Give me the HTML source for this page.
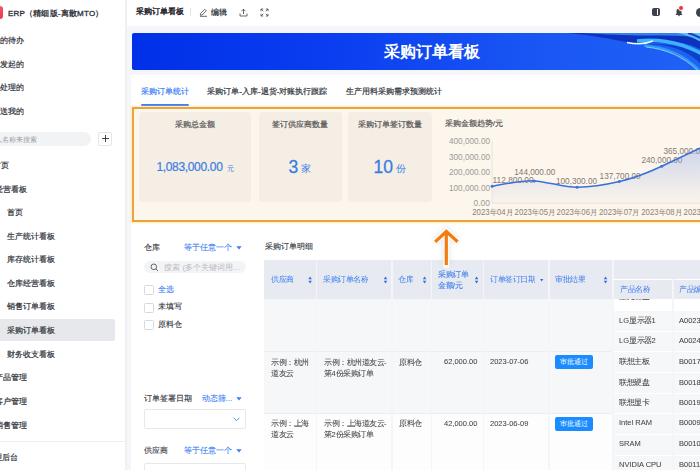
<!DOCTYPE html>
<html><head><meta charset="utf-8">
<style>
*{box-sizing:border-box;margin:0;padding:0}
html,body{width:700px;height:470px;overflow:hidden;background:#f4f6f9;font-family:"Liberation Sans",sans-serif;color:#333;font-size:8px}
.a{position:absolute;white-space:nowrap}
.t{position:absolute;white-space:nowrap;height:10px;line-height:10px}
#side{position:absolute;left:0;top:0;width:125px;height:470px;background:#fff;overflow:hidden}
.mi{position:absolute;white-space:nowrap;height:12px;line-height:12px;font-size:8px;color:#2f343b;-webkit-text-stroke:0.2px}
#top{position:absolute;left:125px;top:0;width:575px;height:26px;background:#fff}
#banner{position:absolute;left:132px;top:33px;width:580px;height:37px;border-radius:2px;background:linear-gradient(90deg,#0030e8 0%,#0a3ef0 35%,#1a56f4 70%,#2062f5 100%);overflow:hidden}
#panel{position:absolute;left:131px;top:75px;width:580px;height:400px;background:#fff}
.blue{color:#3b7ef5}
#obox{position:absolute;left:132px;top:106.8px;width:580px;height:115px;border:2.2px solid #eaa43e;background:#fdf6ec;box-shadow:0 0 1.5px 0.8px rgba(255,225,140,.7)}
.card{position:absolute;top:112px;height:90px;background:#f5eee5;border-radius:4px}
.hd{position:absolute;top:260px;height:39px;background:#e7eaf0}
.sep{position:absolute;width:1.5px;background:#f3f5f8}
.cell{position:absolute;font-size:8px;color:#444;line-height:12.27px;white-space:nowrap;-webkit-text-stroke:0.05px;transform:scale(.9375);transform-origin:0 0}
.sc{transform:scale(.9375);transform-origin:0 50%}
</style></head><body>

<div id="side">
  <div class="a" style="left:-10px;top:6px;width:13px;height:13px;border-radius:3px;background:linear-gradient(135deg,#ff6a6a,#e8384f)"></div>
  <div class="mi" style="left:8px;top:8px;color:#2b2f36;-webkit-text-stroke:0.3px;letter-spacing:0.2px">ERP（精细版-离散MTO）</div>
  <div class="mi" style="left:-8px;top:35px">我的待办</div>
  <div class="mi" style="left:-8px;top:59px">我发起的</div>
  <div class="mi" style="left:-8px;top:82px">我处理的</div>
  <div class="mi" style="left:-8px;top:106px">抄送我的</div>
  <div class="a" style="left:-10px;top:131.5px;width:101px;height:14px;border-radius:7px;background:#f2f3f5"></div>
  <div class="mi" style="left:-12px;top:134px;font-size:7px;color:#9a9ea6;-webkit-text-stroke:0">输入名称来搜索</div>
  <div class="a" style="left:98px;top:132px;width:14px;height:13.5px;border:1px solid #e3e5ea;border-radius:2px;background:#fff"></div>
  <div class="a" style="left:101.5px;top:138.3px;width:7px;height:0.9px;background:#444"></div>
  <div class="a" style="left:104.55px;top:135.2px;width:0.9px;height:7px;background:#444"></div>
  <div class="mi" style="left:-7px;top:160px">首页</div>
  <div class="mi" style="left:-5px;top:184px">经营看板</div>
  <div class="mi" style="left:7px;top:207px">首页</div>
  <div class="mi" style="left:7px;top:230.5px">生产统计看板</div>
  <div class="mi" style="left:7px;top:254px">库存统计看板</div>
  <div class="mi" style="left:7px;top:277.5px">仓库经营看板</div>
  <div class="mi" style="left:7px;top:301px">销售订单看板</div>
  <div class="a" style="left:0;top:319px;width:115px;height:22px;background:#e6e8ec;border-radius:0 2px 2px 0"></div>
  <div class="mi" style="left:7px;top:325px">采购订单看板</div>
  <div class="mi" style="left:7px;top:348.5px">财务收支看板</div>
  <div class="mi" style="left:-5px;top:372px">产品管理</div>
  <div class="mi" style="left:-5px;top:395.5px">客户管理</div>
  <div class="mi" style="left:-5px;top:419.5px">销售管理</div>
  <div class="a" style="left:0;top:440.5px;width:125px;height:1px;background:#eceef1"></div>
  <div class="mi" style="left:-14.5px;top:451.5px">管理后台</div>
</div>

<div id="top">
  <div class="mi" style="left:11px;top:6.3px;color:#1f2329;-webkit-text-stroke:0.4px">采购订单看板</div>
  <div class="a" style="left:64.5px;top:8px;width:1px;height:8px;background:#dfe1e6"></div>
  <svg class="a" style="left:74px;top:7.5px" width="9" height="9" viewBox="0 0 9 9"><path d="M1 8.3H8M1.3 7.2L1.6 5.5 5.8 1.3 7.3 2.8 3.1 7 1.3 7.2Z" fill="none" stroke="#444" stroke-width="0.8"/></svg>
  <div class="mi" style="left:86.4px;top:6.8px;font-size:7.6px;color:#2a2e35">编辑</div>
  <svg class="a" style="left:114px;top:7.5px" width="9" height="9" viewBox="0 0 9 9"><path d="M1 5.5V8H8V5.5M4.5 6V1.2M2.5 3.2L4.5 1.2 6.5 3.2" fill="none" stroke="#444" stroke-width="0.8"/></svg>
  <svg class="a" style="left:134.5px;top:7.5px" width="9" height="9" viewBox="0 0 9 9"><path d="M1 3.2V1H3.2M5.8 1H8V3.2M8 5.8V8H5.8M3.2 8H1V5.8M1.2 1.2L3.3 3.3M7.8 1.2L5.7 3.3M7.8 7.8L5.7 5.7M1.2 7.8L3.3 5.7" fill="none" stroke="#444" stroke-width="0.8"/></svg>
  <div class="a" style="left:526.5px;top:7.7px;width:8.5px;height:8.5px;border-radius:2px;background:#3d434d"></div>
  <div class="a" style="left:531.5px;top:9.3px;width:1.3px;height:5.3px;background:#fff"></div>
  <svg class="a" style="left:549px;top:6px" width="10" height="11" viewBox="0 0 10 11"><path d="M1.5 9H8.5L7.5 7.5V5A2.5 2.5 0 0 0 2.5 5V7.5Z M4 9.3A1 1 0 0 0 6 9.3" fill="#3d434d"/></svg>
  <div class="a" style="left:553px;top:4.5px;width:6px;height:6px;border-radius:3px;background:#f0303f;border:0.8px solid #fff"></div>
  <div class="a" style="left:570.5px;top:7.5px;width:9px;height:9px;border-radius:5px;background:#3d434d"></div>
</div>

<div id="banner">
  <svg class="a" style="left:0;top:0" width="580" height="37" viewBox="0 0 580 37">
    <defs>
      <linearGradient id="w1" x1="0" y1="0" x2="0" y2="1"><stop offset="0" stop-color="#3a8cf5"/><stop offset="0.35" stop-color="#1450d8"/><stop offset="1" stop-color="#082db0"/></linearGradient>
      <filter id="bl"><feGaussianBlur stdDeviation="0.5"/></filter>
    </defs>
    <g filter="url(#bl)">
    <path d="M436 0C468 3 486 8 500 9.8C515 10.5 530 8.5 545 9C565 12 575 20 580 25V0Z" fill="#0a33bd"/>
    <path d="M450 0C480 1.5 500 3 520 2.5C540 2 560 3 580 6V0Z" fill="#3d8ef5" opacity="0.85"/>
    <path d="M512 12C532 10 552 16 566 28L573 37H580V28C565 18 540 8 512 12Z" fill="#0b40c8"/>
    <path d="M505 8C530 5 556 11 580 27" fill="none" stroke="#3db2ff" stroke-width="3.5"/>
    <path d="M512 12.5C532 14 552 22 567 37" fill="none" stroke="#2a9af5" stroke-width="2.6"/>
    <path d="M514 14C534 16 552 24 565 37" fill="none" stroke="#b8e4ff" stroke-width="0.7"/>
    <path d="M545 0C560 3 572 10 580 16V0Z" fill="#62ccff" opacity="0.85"/>
    <path d="M556 0C566 3 575 8 580 12" fill="none" stroke="#1c40c0" stroke-width="2"/>
    <path d="M495 9.5C505 11.5 514 11 521 8" fill="none" stroke="#f0f9ff" stroke-width="1.7"/>
    <path d="M540 20C545 22 548 25 550 27" fill="none" stroke="#9a70e0" stroke-width="0.8" opacity="0.6"/>
    </g>
  </svg>
  <div class="a" style="left:252px;top:9px;height:20px;line-height:20px;font-size:16px;font-weight:bold;color:#fff">采购订单看板</div>
</div>

<div id="panel"></div>
<div class="mi blue" style="left:141px;top:85.7px">采购订单统计</div>
<div class="a" style="left:141px;top:104px;width:48px;height:2px;background:#3b7ef5;border-radius:1px"></div>
<div class="mi" style="left:207.3px;top:85.7px">采购订单-入库-退货-对账执行跟踪</div>
<div class="mi" style="left:345.8px;top:85.7px">生产用料采购需求预测统计</div>

<div id="obox"></div>
<div class="card" style="left:138.5px;width:112.5px"></div>
<div class="card" style="left:258.7px;width:83px"></div>
<div class="card" style="left:348.4px;width:83.5px"></div>
<div class="mi" style="left:175px;top:119.2px;color:#555">采购总金额</div>
<div class="mi" style="left:272px;top:119.2px;color:#555">签订供应商数量</div>
<div class="mi" style="left:358px;top:119.2px;color:#555">采购订单签订数量</div>
<div class="a blue" style="left:156.4px;top:159px;height:16px;line-height:16px;font-size:12px;letter-spacing:-0.33px;color:#3a7de2;-webkit-text-stroke:0.2px">1,083,000.00</div>
<div class="a blue" style="left:227.4px;top:164px;color:#3a7de2;height:10px;line-height:10px;font-size:6.5px">元</div>
<div class="a blue" style="left:288.5px;top:156px;color:#3a7de2;height:22px;line-height:22px;font-size:17.5px;-webkit-text-stroke:0.3px">3</div>
<div class="a blue" style="left:300.5px;top:163px;color:#3a7de2;height:12px;line-height:12px;font-size:10px">家</div>
<div class="a blue" style="left:373.5px;top:156px;color:#3a7de2;height:22px;line-height:22px;font-size:17.5px;-webkit-text-stroke:0.3px">10</div>
<div class="a blue" style="left:395.8px;top:163px;color:#3a7de2;height:12px;line-height:12px;font-size:10px">份</div>

<div class="mi" style="left:444.7px;top:118px;color:#555">采购金额趋势/元</div>
<div class="a" style="left:133px;top:109px;width:567px;height:112px;overflow:hidden">
<svg class="a" style="left:-133px;top:-109px" width="700" height="470" viewBox="0 0 700 470">
  <defs>
    <linearGradient id="ar" x1="0" y1="146" x2="0" y2="203" gradientUnits="userSpaceOnUse"><stop offset="0" stop-color="#7a9de6" stop-opacity="0.38"/><stop offset="0.6" stop-color="#8aa6e6" stop-opacity="0.18"/><stop offset="1" stop-color="#9ab0e6" stop-opacity="0.03"/></linearGradient>
  </defs>
  <g font-family="Liberation Sans" font-size="8.8" fill="#9a9a9a" text-anchor="end">
    <text x="490" y="144.3" textLength="41.0" lengthAdjust="spacingAndGlyphs">400,000.00</text>
    <text x="490" y="159.7" textLength="41.0" lengthAdjust="spacingAndGlyphs">300,000.00</text>
    <text x="490" y="175.1" textLength="41.0" lengthAdjust="spacingAndGlyphs">200,000.00</text>
    <text x="490" y="190.5" textLength="41.0" lengthAdjust="spacingAndGlyphs">100,000.00</text>
    <text x="490" y="205.9" textLength="16.4" lengthAdjust="spacingAndGlyphs">0.00</text>
  </g>
  <line x1="492.1" y1="141" x2="492.1" y2="203" stroke="#e6e1da" stroke-width="0.8"/>
  <line x1="492.1" y1="203.2" x2="700" y2="203.2" stroke="#e2ddd6" stroke-width="0.8"/>
  <g font-family="Liberation Sans" font-size="8.8" fill="#847b74">
    <text x="492.6" y="182.5" textLength="41.0" lengthAdjust="spacingAndGlyphs">112,800.00</text>
    <text x="514.3" y="174.9" textLength="41.0" lengthAdjust="spacingAndGlyphs">144,000.00</text>
    <text x="556" y="183.8" textLength="41.0" lengthAdjust="spacingAndGlyphs">100,300.00</text>
    <text x="599.6" y="178.7" textLength="41.0" lengthAdjust="spacingAndGlyphs">137,700.00</text>
    <text x="641.4" y="162.9" textLength="41.0" lengthAdjust="spacingAndGlyphs">240,000.00</text>
    <text x="663.5" y="153.9" textLength="41.0" lengthAdjust="spacingAndGlyphs">365,000.00</text>
  </g>
  <path d="M492.1 186.2 C499.1 185.3 520.2 180.2 534.2 180.9 C548.2 181.6 562.9 187.2 577.1 187.3 C591.3 187.4 604.5 185.1 619.3 181.6 C634.1 178.1 647.4 173.1 661.7 166.3 C676 159.5 696.2 150 703.1 146.7 L703.1 203 L492.1 203Z" fill="url(#ar)"/>
  <path d="M492.1 186.2 C499.1 185.3 520.2 180.2 534.2 180.9 C548.2 181.6 562.9 187.2 577.1 187.3 C591.3 187.4 604.5 185.1 619.3 181.6 C634.1 178.1 647.4 173.1 661.7 166.3 C676 159.5 696.2 150 703.1 146.7" fill="none" stroke="#3a70d8" stroke-width="1.5"/>
  <g fill="#3a72dc">
    <circle cx="492.1" cy="186.2" r="1.5"/><circle cx="534.2" cy="180.9" r="1.5"/><circle cx="577.1" cy="187.3" r="1.5"/><circle cx="619.3" cy="181.6" r="1.5"/><circle cx="661.7" cy="166.3" r="1.5"/>
  </g>
  <g font-family="Liberation Sans" font-size="8.4" fill="#8a8078" text-anchor="middle">
    <text x="492.7" y="215.1" textLength="40.8" lengthAdjust="spacingAndGlyphs">2023年04月</text>
    <text x="535" y="215.1" textLength="40.8" lengthAdjust="spacingAndGlyphs">2023年05月</text>
    <text x="577" y="215.1" textLength="40.8" lengthAdjust="spacingAndGlyphs">2023年06月</text>
    <text x="619.4" y="215.1" textLength="40.8" lengthAdjust="spacingAndGlyphs">2023年07月</text>
    <text x="661.7" y="215.1" textLength="40.8" lengthAdjust="spacingAndGlyphs">2023年08月</text>
    <text x="704" y="215.1" textLength="40.8" lengthAdjust="spacingAndGlyphs">2023年09月</text>
  </g>
</svg>
</div>

<!-- filter -->
<div class="mi" style="left:144.2px;top:242px;-webkit-text-stroke:0.1px">仓库</div>
<div class="mi blue" style="left:183.8px;top:242px;-webkit-text-stroke:0.1px">等于任意一个</div>
<svg class="a" style="left:235.5px;top:246px" width="6" height="4"><path d="M0.3 0.3H5.7L3 3.5Z" fill="#3b7ef5"/></svg>
<div class="a" style="left:144.2px;top:260.6px;width:102px;height:12.2px;border-radius:6.1px;background:#f3f4f6"></div>
<svg class="a" style="left:150px;top:262.5px" width="9" height="9" viewBox="0 0 9 9"><circle cx="3.8" cy="3.8" r="2.8" fill="none" stroke="#555" stroke-width="0.9"/><path d="M5.9 5.9L8 8" stroke="#555" stroke-width="0.9"/></svg>
<div class="mi" style="left:164.4px;top:261.8px;font-size:8px;color:#b9bcc2;-webkit-text-stroke:0">搜索 (多个关键词用...</div>
<div class="a" style="left:143.5px;top:285px;width:10px;height:10px;border:1px solid #d6d9de;border-radius:1.5px;background:#fff"></div>
<div class="mi blue" style="left:157.7px;top:283.6px;-webkit-text-stroke:0.1px">全选</div>
<div class="a" style="left:143.5px;top:302.5px;width:10px;height:10px;border:1px solid #d6d9de;border-radius:1.5px;background:#fff"></div>
<div class="mi" style="left:157.7px;top:301.3px;-webkit-text-stroke:0.1px">未填写</div>
<div class="a" style="left:143.5px;top:320px;width:10px;height:10px;border:1px solid #d6d9de;border-radius:1.5px;background:#fff"></div>
<div class="mi" style="left:157.7px;top:318.6px;-webkit-text-stroke:0.1px">原料仓</div>

<div class="mi" style="left:144.1px;top:393px;-webkit-text-stroke:0.1px">订单签署日期</div>
<div class="mi blue" style="left:201.6px;top:393px;-webkit-text-stroke:0.1px">动态筛...</div>
<svg class="a" style="left:235.5px;top:397px" width="6" height="4"><path d="M0.3 0.3H5.7L3 3.5Z" fill="#3b7ef5"/></svg>
<div class="a" style="left:143.7px;top:409.4px;width:102.6px;height:19.2px;border:1px solid #e6e8ec;border-radius:2px;background:#fff"></div>
<svg class="a" style="left:233px;top:417px" width="7" height="5"><path d="M0.6 0.8L3.5 3.7 6.4 0.8" fill="none" stroke="#4a7fd8" stroke-width="0.9"/></svg>
<div class="mi" style="left:144px;top:445px;-webkit-text-stroke:0.1px">供应商</div>
<div class="mi blue" style="left:183.5px;top:445px;-webkit-text-stroke:0.1px">等于任意一个</div>
<svg class="a" style="left:235.5px;top:449px" width="6" height="4"><path d="M0.3 0.3H5.7L3 3.5Z" fill="#3b7ef5"/></svg>
<div class="a" style="left:143.7px;top:462.6px;width:102.6px;height:19.2px;border:1px solid #e6e8ec;border-radius:2px;background:#fff"></div>

<!-- table -->
<div class="mi" style="left:264.5px;top:241px;-webkit-text-stroke:0.1px">采购订单明细</div>
<div class="a" style="left:264.4px;top:260px;width:440px;height:39px;background:#e7eaf0"></div>
<div class="a" style="left:264.4px;top:299px;width:440px;height:52px;background:#f6f7f9"></div>
<div class="a" style="left:264.4px;top:350.5px;width:440px;height:62.5px;background:#f6f7f9;border-top:1px solid #eceef2"></div>
<div class="a" style="left:264.4px;top:413px;width:440px;height:60px;background:#fdfdfe;border-top:1px solid #eceef2"></div>
<!-- col separators -->
<div class="sep" style="left:315.5px;top:260px;height:210px"></div>
<div class="sep" style="left:391.3px;top:260px;height:210px"></div>
<div class="sep" style="left:430.5px;top:260px;height:210px"></div>
<div class="sep" style="left:482.8px;top:260px;height:210px"></div>
<div class="sep" style="left:548px;top:260px;height:210px"></div>
<div class="sep" style="left:612.4px;top:260px;height:210px"></div>
<div class="a" style="left:613px;top:278.6px;width:90px;height:1.2px;background:#fff"></div>
<div class="sep" style="left:672.2px;top:279px;height:191px"></div>
<!-- header texts -->
<div class="mi blue" style="left:270.8px;top:274px;font-size:8px;-webkit-text-stroke:0;color:#3b7cf0;transform:scale(.9375);transform-origin:0 50%">供应商</div>
<div class="mi blue" style="left:323px;top:274px;font-size:8px;-webkit-text-stroke:0;color:#3b7cf0;transform:scale(.9375);transform-origin:0 50%">采购订单名称</div>
<div class="mi blue" style="left:398.3px;top:274px;font-size:8px;-webkit-text-stroke:0;color:#3b7cf0;transform:scale(.9375);transform-origin:0 50%">仓库</div>
<div class="a blue" style="left:438px;top:268.5px;font-size:8px;color:#3f7fee;-webkit-text-stroke:0.1px;line-height:12.27px;white-space:nowrap;transform:scale(.9375);transform-origin:0 0">采购订单<br>金额/元</div>
<div class="mi blue" style="left:490.1px;top:274px;font-size:8px;-webkit-text-stroke:0;color:#3b7cf0;transform:scale(.9375);transform-origin:0 50%">订单签订日期</div>
<div class="mi blue" style="left:555.3px;top:274px;font-size:8px;-webkit-text-stroke:0;color:#3b7cf0;transform:scale(.9375);transform-origin:0 50%">审批结果</div>
<div class="mi blue" style="left:619.6px;top:284px;font-size:8px;-webkit-text-stroke:0;color:#3b7cf0;transform:scale(.9375);transform-origin:0 50%">产品名称</div>
<div class="mi blue" style="left:679px;top:284px;font-size:8px;-webkit-text-stroke:0;color:#3b7cf0;transform:scale(.9375);transform-origin:0 50%">产品编号</div>
<svg class="a" style="left:0;top:0" width="700" height="470">
  <g fill="#3b6fd8">
    <path d="M308.3 279.2L310.1 276.6 311.9 279.2Z M308.3 280.8L310.1 283.4 311.9 280.8Z"/>
    <path d="M383.7 279.2L385.5 276.6 387.3 279.2Z M383.7 280.8L385.5 283.4 387.3 280.8Z"/>
    <path d="M422.8 279.2L424.6 276.6 426.4 279.2Z M422.8 280.8L424.6 283.4 426.4 280.8Z"/>
    <path d="M474.8 279.2L476.6 276.6 478.4 279.2Z M474.8 280.8L476.6 283.4 478.4 280.8Z"/>
    <path d="M603.7 279.2L605.5 276.6 607.3 279.2Z M603.7 280.8L605.5 283.4 607.3 280.8Z"/>
    <path d="M540 279L543.4 279 541.7 281.4Z"/>
  </g>
</svg>
<!-- sub table rows -->
<div class="a" style="left:613.5px;top:299px;width:90px;height:11px;background:#fff"></div>
<div class="a" style="left:613.5px;top:310px;width:90px;height:20.9px;background:#f6f7f9;border-top:1px solid #fff"></div>
<div class="a" style="left:613.5px;top:330.9px;width:90px;height:20.2px;background:#f6f7f9;border-top:1px solid #fff"></div>
<div class="a" style="left:613.5px;top:351.1px;width:90px;height:21.1px;background:#f6f7f9;border-top:1px solid #fff"></div>
<div class="a" style="left:613.5px;top:372.2px;width:90px;height:20.8px;background:#f6f7f9;border-top:1px solid #fff"></div>
<div class="a" style="left:613.5px;top:393px;width:90px;height:20.2px;background:#f6f7f9;border-top:1px solid #fff"></div>
<div class="a" style="left:613.5px;top:413.2px;width:90px;height:20.8px;background:#f6f7f9;border-top:1px solid #fff"></div>
<div class="a" style="left:613.5px;top:434px;width:90px;height:21px;background:#f6f7f9;border-top:1px solid #fff"></div>
<div class="a" style="left:613.5px;top:455px;width:90px;height:21px;background:#f6f7f9;border-top:1px solid #fff"></div>
<div class="sep" style="left:672.2px;top:299px;height:171px"></div>
<!-- partial row text -->
<div class="a" style="left:613px;top:299px;width:90px;height:3.5px;overflow:hidden"><div class="cell" style="left:6px;top:-8px">蓝光硬盘</div><div class="cell" style="left:66px;top:-8px">A0022</div></div>
<div class="cell" style="left:619.1px;top:314.7px">LG显示器1</div><div class="cell" style="left:679.2px;top:314.7px">A0023</div>
<div class="cell" style="left:619.1px;top:334.5px">LG显示器2</div><div class="cell" style="left:679.2px;top:334.5px">A0024</div>
<div class="cell" style="left:619.1px;top:355.8px">联想主板</div><div class="cell" style="left:679.2px;top:355.8px">B0017</div>
<div class="cell" style="left:619.1px;top:376.6px">联想硬盘</div><div class="cell" style="left:679.2px;top:376.6px">B0018</div>
<div class="cell" style="left:619.1px;top:397.4px">联想显卡</div><div class="cell" style="left:679.2px;top:397.4px">B0019</div>
<div class="cell" style="left:619.1px;top:417.3px">Intel RAM</div><div class="cell" style="left:679.2px;top:417.3px">B0009</div>
<div class="cell" style="left:619.1px;top:438.1px">SRAM</div><div class="cell" style="left:679.2px;top:438.1px">B0010</div>
<div class="cell" style="left:619.1px;top:458.9px">NVIDIA CPU</div><div class="cell" style="left:679.2px;top:458.9px">B0011</div>
<!-- row B -->
<div class="cell" style="left:270.8px;top:356.5px">示例：杭州<br>道友云</div>
<div class="cell" style="left:323.8px;top:356.5px">示例：杭州道友云-<br>第4份采购订单</div>
<div class="cell" style="left:398.9px;top:356.5px">原料仓</div>
<div class="cell" style="left:443.8px;top:356px">62,000.00</div>
<div class="cell" style="left:490.3px;top:356px">2023-07-06</div>
<div class="a" style="left:555px;top:355.2px;width:38.2px;height:13.8px;background:#1a8cff;border-radius:2px;color:#fff;font-size:7px;line-height:13.8px;text-align:center">审批通过</div>
<!-- row C -->
<div class="cell" style="left:270.8px;top:418px">示例：上海<br>道友云</div>
<div class="cell" style="left:323.8px;top:418px">示例：上海道友云-<br>第2份采购订单</div>
<div class="cell" style="left:398.9px;top:418px">原料仓</div>
<div class="cell" style="left:443.8px;top:418px">42,000.00</div>
<div class="cell" style="left:490.3px;top:418px">2023-06-09</div>
<div class="a" style="left:555px;top:417.2px;width:38.2px;height:13.8px;background:#1a8cff;border-radius:2px;color:#fff;font-size:7px;line-height:13.8px;text-align:center">审批通过</div>

<!-- arrow -->
<svg class="a" style="left:420px;top:220px" width="60" height="55" viewBox="0 0 60 55">
  <defs><filter id="gl" x="-50%" y="-50%" width="200%" height="200%"><feGaussianBlur stdDeviation="2"/></filter></defs>
  <path d="M26.3 45V11.5M15.2 21.8L26.3 11.5 37.6 21.8" fill="none" stroke="#b9c6dc" stroke-width="8" opacity="0.35" filter="url(#gl)"/>
  <path d="M26.3 45.6V11.5M15.2 21.8L26.3 11.5 37.6 21.8" fill="none" stroke="#fffaf0" stroke-width="6" stroke-linecap="round" stroke-linejoin="round"/>
  <path d="M26.3 45V11.5M15.2 21.8L26.3 11.5 37.6 21.8" fill="none" stroke="#f27b14" stroke-width="3.2" stroke-linecap="butt" stroke-linejoin="miter"/>
</svg>
<div class="a" style="left:125px;top:0;width:1.6px;height:470px;background:#eff0f3"></div>
</body></html>
